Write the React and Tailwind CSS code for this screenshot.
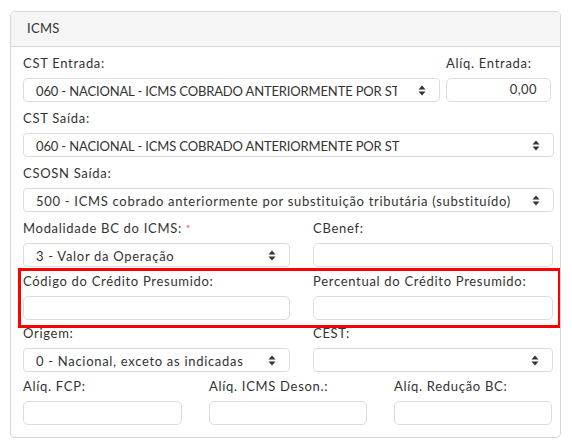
import React from 'react';

const font = { fontFamily: '"Lato", "Liberation Sans", sans-serif' };

const SortIcon = () => (
    <svg width="8" height="11" viewBox="0 0 8 11" className="shrink-0">
        <path d="M4 0.5 L7.5 4.5 L0.5 4.5 Z" fill="#333" />
        <path d="M4 10.5 L7.5 6.5 L0.5 6.5 Z" fill="#333" />
    </svg>
);

const Label = ({ children, required }) => (
    <div className="h-[17px] leading-[17px] text-[13px] tracking-[0.7px] text-[#333] whitespace-nowrap">
        {children}
        {required && <span className="text-red-500 ml-1 text-[10px] align-top">*</span>}
    </div>
);

const Select = ({ value, caps, className = '' }) => (
    <div className={`h-[24px] mt-[6px] flex items-center border border-[#dadde0] rounded-[4px] bg-white pl-[12px] pr-[13px] ${className}`}>
        <div className="flex-1 overflow-hidden mr-[21px]">
            <span className={`text-[13px] text-[#333] whitespace-nowrap ${caps ? 'tracking-[-0.15px]' : 'tracking-[0.7px]'}`}>{value}</span>
        </div>
        <SortIcon />
    </div>
);

const Input = ({ value, className = '' }) => (
    <div className={`h-[24px] mt-[6px] flex items-center justify-end border border-[#dadde0] rounded-[5px] bg-white pr-[13px] ${className}`}>
        <span className="text-[13px] tracking-[0.4px] text-[#333]">{value}</span>
    </div>
);

export default function App() {
    return (
        <div className="w-[572px] h-[444px] bg-white pt-[11px] pl-[10px]" style={font}>
            <div className="w-[551px] h-[427px] border border-[#d6d6d6] rounded-[5px] overflow-hidden">
                <div className="h-[35px] bg-[#f5f5f5] border-b border-[#d6d6d6] flex items-center pl-[16px]">
                    <span className="text-[13px] tracking-[0.3px] text-[#333]">ICMS</span>
                </div>

                <div className="pl-[12px] pt-[8px]">
                    <div className="flex gap-[6px]">
                        <div className="w-[417px]">
                            <Label>CST Entrada:</Label>
                            <Select caps value="060 - NACIONAL - ICMS COBRADO ANTERIORMENTE POR ST" />
                        </div>
                        <div className="w-[105px]">
                            <Label>Alíq. Entrada:</Label>
                            <Input value="0,00" />
                        </div>
                    </div>

                    <div className="mt-[8px] w-[531px]">
                        <Label>CST Saída:</Label>
                        <Select caps value="060 - NACIONAL - ICMS COBRADO ANTERIORMENTE POR ST" />
                    </div>

                    <div className="mt-[8px] w-[531px]">
                        <Label>CSOSN Saída:</Label>
                        <Select value="500 - ICMS cobrado anteriormente por substituição tributária (substituído) ou por antecipação" />
                    </div>

                    <div className="mt-[8px] flex gap-[23px]">
                        <div className="w-[267px]">
                            <Label required>Modalidade BC do ICMS:</Label>
                            <Select value="3 - Valor da Operação" />
                        </div>
                        <div className="w-[240px]">
                            <Label>CBenef:</Label>
                            <Input value="" />
                        </div>
                    </div>

                    <div className="relative mt-[6px] flex gap-[23px]">
                        <div className="absolute -left-[5px] -top-[5px] w-[543px] h-[60px] border-[3px] border-[#ff0000] pointer-events-none" />
                        <div className="w-[267px]">
                            <Label>Código do Crédito Presumido:</Label>
                            <Input value="" />
                        </div>
                        <div className="w-[240px]">
                            <Label>Percentual do Crédito Presumido:</Label>
                            <Input value="" />
                        </div>
                    </div>

                    <div className="mt-[5px] flex gap-[23px]">
                        <div className="w-[267px]">
                            <Label>Origem:</Label>
                            <Select value="0 - Nacional, exceto as indicadas" />
                        </div>
                        <div className="w-[240px]">
                            <Label>CEST:</Label>
                            <Select value="" />
                        </div>
                    </div>

                    <div className="mt-[6px] flex gap-[27px]">
                        <div className="w-[159px]">
                            <Label>Alíq. FCP:</Label>
                            <Input value="" />
                        </div>
                        <div className="w-[158px]">
                            <Label>Alíq. ICMS Deson.:</Label>
                            <Input value="" />
                        </div>
                        <div className="w-[158px]">
                            <Label>Alíq. Redução BC:</Label>
                            <Input value="" />
                        </div>
                    </div>
                </div>
            </div>
        </div>
    );
}
